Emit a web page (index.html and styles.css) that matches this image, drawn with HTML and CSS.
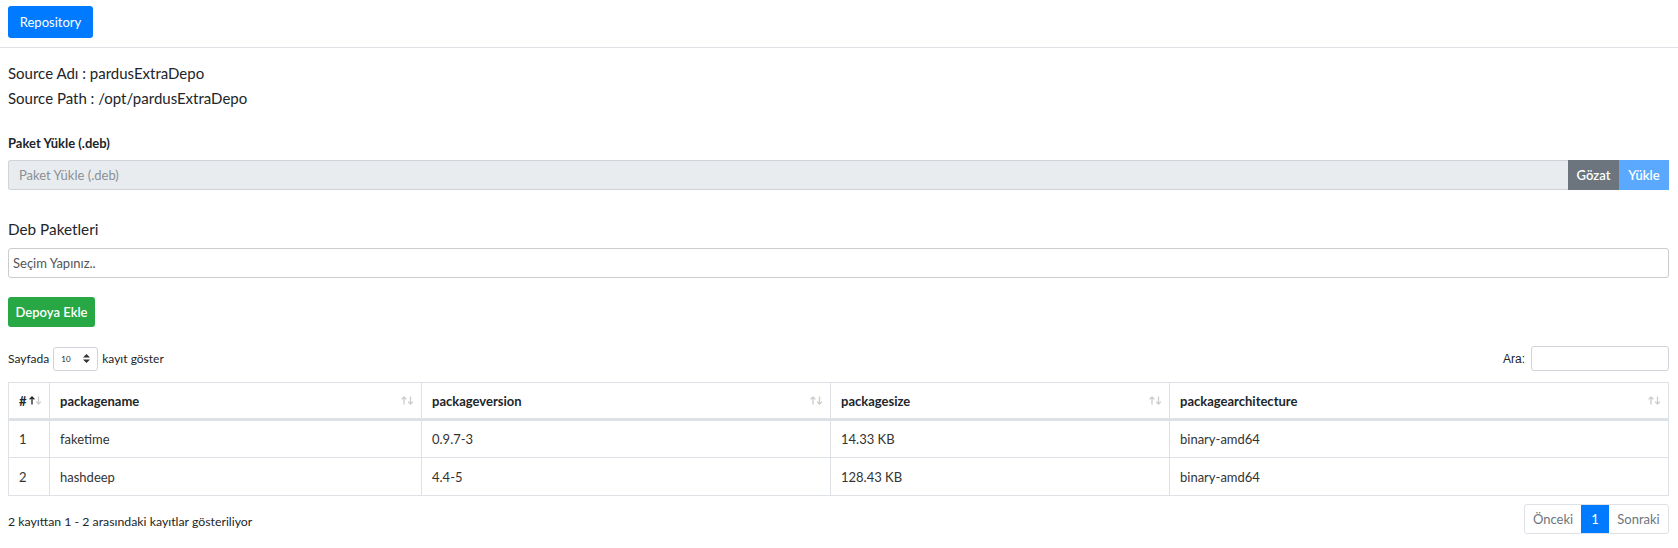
FILE: index.html
```html
<!DOCTYPE html>
<html lang="tr">
<head>
<meta charset="utf-8">
<title>Repository</title>
<link rel="stylesheet" href="styles.css">
</head>
<body>
<header class="topbar">
  <button class="btn btn-primary btn-repo">Repository</button>
</header>
<main class="content">
  <section class="info">
    <p>Source Adı : pardusExtraDepo</p>
    <p>Source Path : /opt/pardusExtraDepo</p>
  </section>

  <label class="field-label">Paket Yükle (.deb)</label>
  <div class="input-group">
    <div class="file-input">Paket Yükle (.deb)</div>
    <button class="addon addon-browse">Gözat</button>
    <button class="addon addon-upload">Yükle</button>
  </div>

  <h4 class="section-title">Deb Paketleri</h4>
  <div class="select-box">Seçim Yapınız..</div>

  <button class="btn btn-success btn-add">Depoya Ekle</button>

  <div class="dt-top">
    <div class="dt-length">
      <span>Sayfada</span>
      <div class="len-select"><span>10</span>
        <svg class="updown" width="7" height="9" viewBox="0 0 7 9"><path d="M3.5 0 L7 3.5 H0 Z M3.5 9 L7 5.5 H0 Z" fill="#333"/></svg>
      </div>
      <span>kayıt göster</span>
    </div>
    <div class="dt-search">
      <span>Ara:</span>
      <div class="search-input"></div>
    </div>
  </div>

  <table class="dt">
    <colgroup>
      <col style="width:41px">
      <col style="width:372px">
      <col style="width:409px">
      <col style="width:339px">
      <col>
    </colgroup>
    <thead>
      <tr>
        <th>#<svg class="sort" width="13" height="9" viewBox="0 0 13 9"><path d="M3 8.5V1M0.6 3.4L3 1L5.4 3.4" stroke="#222" stroke-width="1.3" fill="none"/><path d="M9.5 0.5V8M7.1 5.6L9.5 8L11.9 5.6" stroke="#ccc" stroke-width="1.3" fill="none"/></svg></th>
        <th>packagename<svg class="sort" width="13" height="9" viewBox="0 0 13 9"><path d="M3 8.5V1M0.6 3.4L3 1L5.4 3.4" stroke="#ccc" stroke-width="1.3" fill="none"/><path d="M9.5 0.5V8M7.1 5.6L9.5 8L11.9 5.6" stroke="#ccc" stroke-width="1.3" fill="none"/></svg></th>
        <th>packageversion<svg class="sort" width="13" height="9" viewBox="0 0 13 9"><path d="M3 8.5V1M0.6 3.4L3 1L5.4 3.4" stroke="#ccc" stroke-width="1.3" fill="none"/><path d="M9.5 0.5V8M7.1 5.6L9.5 8L11.9 5.6" stroke="#ccc" stroke-width="1.3" fill="none"/></svg></th>
        <th>packagesize<svg class="sort" width="13" height="9" viewBox="0 0 13 9"><path d="M3 8.5V1M0.6 3.4L3 1L5.4 3.4" stroke="#ccc" stroke-width="1.3" fill="none"/><path d="M9.5 0.5V8M7.1 5.6L9.5 8L11.9 5.6" stroke="#ccc" stroke-width="1.3" fill="none"/></svg></th>
        <th>packagearchitecture<svg class="sort" width="13" height="9" viewBox="0 0 13 9"><path d="M3 8.5V1M0.6 3.4L3 1L5.4 3.4" stroke="#ccc" stroke-width="1.3" fill="none"/><path d="M9.5 0.5V8M7.1 5.6L9.5 8L11.9 5.6" stroke="#ccc" stroke-width="1.3" fill="none"/></svg></th>
      </tr>
    </thead>
    <tbody>
      <tr><td>1</td><td>faketime</td><td>0.9.7-3</td><td>14.33 KB</td><td>binary-amd64</td></tr>
      <tr><td>2</td><td>hashdeep</td><td>4.4-5</td><td>128.43 KB</td><td>binary-amd64</td></tr>
    </tbody>
  </table>

  <div class="dt-bottom">
    <div class="dt-info">2 kayıttan 1 - 2 arasındaki kayıtlar gösteriliyor</div>
    <nav class="pagination">
      <span class="page page-prev">Önceki</span>
      <span class="page page-active">1</span>
      <span class="page page-next">Sonraki</span>
    </nav>
  </div>
</main>
</body>
</html>
```
FILE: styles.css
```css
* { box-sizing: border-box; }
body {
  margin: 0;
  font-family: Lato, "Noto Sans", sans-serif;
  color: #212529;
  background: #fff;
}
.topbar {
  padding: 6px 8px 9px;
  border-bottom: 1px solid #dee2e6;
}
.btn {
  display: inline-flex;
  align-items: center;
  justify-content: center;
  border: 0;
  border-radius: 3px;
  color: #fff;
  font-family: inherit;
  font-size: 13px;
  padding: 0;
}
.btn-primary { background: #007bff; }
.btn-repo { width: 85px; height: 32px; }
.btn-success { background: #28a745; }
.btn-add { width: 87px; height: 30px; margin-top: 19px; display: flex; font-weight: 600; }

.content { padding: 13px 9px 0 8px; }
.info p { margin: 0; font-size: 15px; line-height: 25px; color: #212529; }

.field-label {
  display: block;
  margin-top: 22px;
  font-size: 13px;
  font-weight: 700;
  line-height: 20px;
}
.input-group {
  display: flex;
  margin-top: 7px;
  height: 30px;
}
.file-input {
  flex: 1;
  background: #e9ecef;
  border: 1px solid #ced4da;
  border-right: 0;
  border-radius: 3px 0 0 3px;
  font-size: 13px;
  color: #8a9096;
  padding-left: 10px;
  display: flex;
  align-items: center;
}
.addon {
  border: 0;
  font-family: inherit;
  font-size: 13px;
  font-weight: 600;
  color: #fff;
  padding: 0;
  height: 30px;
}
.addon-browse { background: #6c757d; width: 51px; }
.addon-upload { background: #5aa9ff; width: 50px; }

.section-title {
  margin: 27px 0 0;
  font-size: 15.3px;
  font-weight: 400;
  line-height: 25px;
}
.select-box {
  margin-top: 6px;
  height: 30px;
  border: 1px solid #ccc;
  border-radius: 3px;
  font-size: 13px;
  color: #555;
  padding-left: 4px;
  display: flex;
  align-items: center;
}

.dt-top {
  display: flex;
  justify-content: space-between;
  align-items: center;
  margin-top: 19px;
  font-size: 12px;
}
.dt-length, .dt-search { display: flex; align-items: center; gap: 4px; }
.len-select {
  width: 45px;
  height: 24px;
  border: 1px solid #ced4da;
  border-radius: 3px;
  display: flex;
  align-items: center;
  justify-content: space-between;
  padding: 0 7px 0 7px;
  font-size: 8px;
}
.search-input {
  width: 138px;
  height: 25px;
  border: 1px solid #ced4da;
  border-radius: 3px;
  margin-left: 2px;
}
.dt-search { font-family: "Liberation Sans", Arial, sans-serif; }

.dt {
  width: 100%;
  margin-top: 11px;
  border-collapse: collapse;
  table-layout: fixed;
  font-size: 13px;
}
.dt th, .dt td {
  border: 1px solid #dee2e6;
  text-align: left;
  padding: 0 10px;
}
.dt th {
  position: relative;
  height: 37px;
  font-weight: 700;
  color: #212529;
  border-bottom: 3px solid #dee2e6;
}
.dt td { color: #333; height: 38px; }
.sort {
  position: absolute;
  right: 7px;
  top: 13px;
}

.dt-bottom {
  display: flex;
  justify-content: space-between;
  align-items: center;
  margin-top: 8px;
}
.dt-info { font-size: 12.3px; color: #212529; padding-top: 4px; }
.pagination {
  display: flex;
  height: 30px;
  border: 1px solid #dee2e6;
  border-radius: 3px;
  font-size: 13px;
}
.page { display: flex; align-items: center; justify-content: center; color: #6c757d; }
.page-prev { width: 56px; }
.page-active { width: 28px; background: #007bff; color: #fff; }
.page-next { width: 59px; }
```
